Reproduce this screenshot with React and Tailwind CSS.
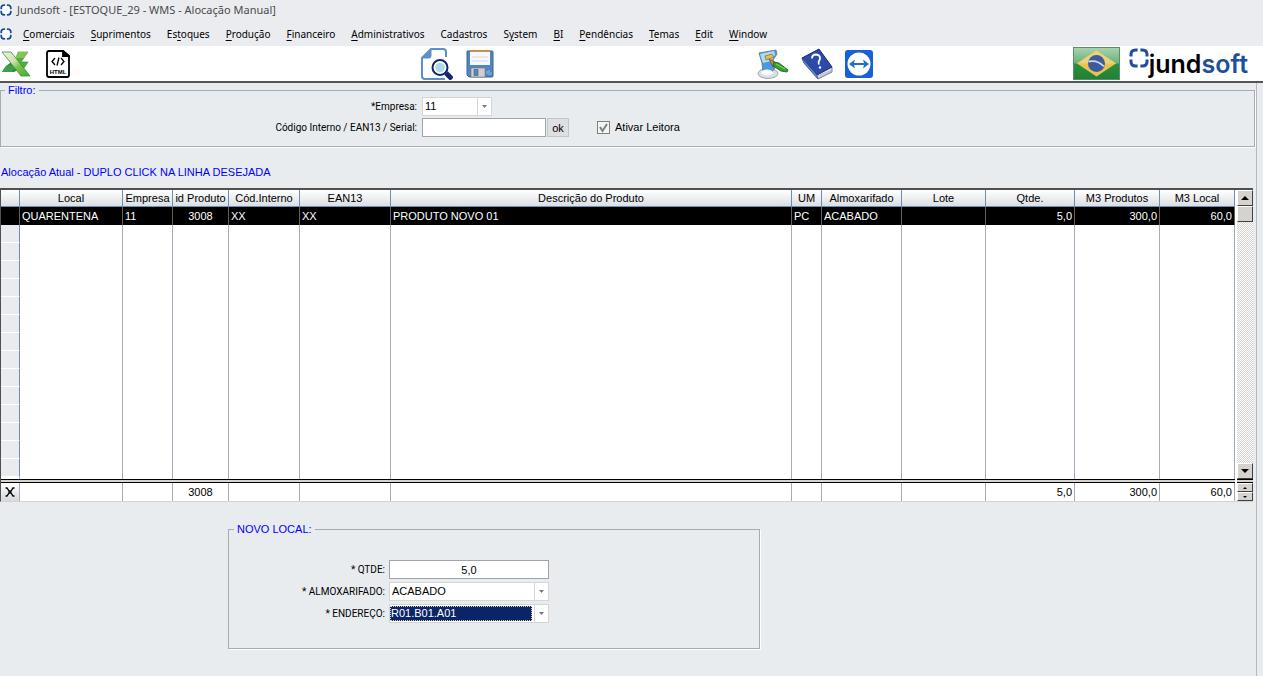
import React, { useState } from "react";

const menus = [
  ["", "C", "omerciais"],
  ["", "S", "uprimentos"],
  ["Es", "t", "oques"],
  ["", "P", "rodução"],
  ["", "F", "inanceiro"],
  ["", "A", "dministrativos"],
  ["Ca", "d", "astros"],
  ["S", "y", "stem"],
  ["", "B", "I"],
  ["", "P", "endências"],
  ["", "T", "emas"],
  ["", "E", "dit"],
  ["", "W", "indow"],
];

const columns = [
  { title: "", width: "w-[19px]" },
  { title: "Local", width: "w-[103px]", value: "QUARENTENA" },
  { title: "Empresa", width: "w-[50px]", value: "11" },
  { title: "id Produto", width: "w-[56px]", value: "3008", total: "3008", align: "text-center" },
  { title: "Cód.Interno", width: "w-[71px]", value: "XX" },
  { title: "EAN13", width: "w-[91px]", value: "XX" },
  { title: "Descrição do Produto", width: "", value: "PRODUTO NOVO 01" },
  { title: "UM", width: "w-[30px]", value: "PC" },
  { title: "Almoxarifado", width: "w-[80px]", value: "ACABADO" },
  { title: "Lote", width: "w-[84px]", value: "" },
  { title: "Qtde.", width: "w-[89px]", value: "5,0", total: "5,0", align: "text-right" },
  { title: "M3 Produtos", width: "w-[85px]", value: "300,0", total: "300,0", align: "text-right" },
  { title: "M3 Local", width: "w-[75px]", value: "60,0", total: "60,0", align: "text-right" },
];

const emptyRows = Array.from({ length: 14 }, (_, i) => i);

const LogoMark = ({ size }) => (
  <svg width={size} height={size} viewBox="0 0 20 20" fill="none" stroke="#1c4f9c" strokeWidth="3" className="bg-white">
    <path d="M8.6 2H6.5Q2 2 2 6.5V8.6M11.4 2h2.1Q18 2 18 6.5V8.6M18 11.4v2.1Q18 18 13.5 18H11.4M8.6 18H6.5Q2 18 2 13.5V11.4" />
  </svg>
);

const ExcelIcon = () => (
  <svg width="30" height="28" viewBox="0 0 30 28">
    <defs>
      <linearGradient id="band" x1="0" y1="0" x2="1" y2="1">
        <stop offset="0" stopColor="#f0f3e2" />
        <stop offset=".4" stopColor="#cfe0b0" />
        <stop offset=".6" stopColor="#7dc24b" />
        <stop offset="1" stopColor="#46a83a" />
      </linearGradient>
    </defs>
    <path d="M17 2h10l-7 10h7l-4 6h-9z" fill="#4fae3c" stroke="#2f8a36" strokeWidth=".6" />
    <path d="M17 2h10l-4 6h-9z" fill="#83c552" />
    <path d="M13 10l6 9-6 3H1l4-6z" fill="#2c8a3c" />
    <path d="M1 22l4-6 12-2-6 8z" fill="#3f9f48" />
    <path d="M1 2h9l19 24h-9z" fill="url(#band)" stroke="#39933b" strokeWidth=".8" />
  </svg>
);

const HtmlIcon = () => (
  <svg width="24" height="28" viewBox="0 0 24 28" fill="none" stroke="#000" strokeWidth="1.800">
    <path d="M3 1h14l6 5v19q0 2-2 2H3q-2 0-2-2V3q0-2 2-2z" />
    <path d="M17 1v5h6z" fill="#000" />
    <path d="M9 8l-3 3.500 3 3.500M15 8l3 3.500-3 3.500M13 7.500l-2 8" strokeWidth="1.300" />
    <text x="12" y="23.500" fontSize="6" fontWeight="700" fontFamily="Liberation Sans, sans-serif" textAnchor="middle" fill="#000" stroke="none">HTML</text>
  </svg>
);

const SearchDocIcon = () => (
  <svg width="32" height="32" viewBox="0 0 32 32" fill="none">
    <path d="M25 9V4q0-3-3-3H10L1 10v18q0 3 3 3h20" stroke="#5a91cc" strokeWidth="2" />
    <path d="M10 1v7q0 2-2 2H1z" fill="#5a91cc" stroke="#5a91cc" />
    <path d="M25 25l6 6" stroke="#14246e" strokeWidth="5" />
    <circle cx="19" cy="19.500" r="7.500" fill="#fff" stroke="#14246e" strokeWidth="2" />
    <circle cx="19" cy="19.500" r="4.800" fill="#addbe9" />
  </svg>
);

const SaveIcon = () => (
  <svg width="28" height="28" viewBox="0 0 28 28">
    <path d="M1 1h25q1 0 1 1v24q0 1-1 1H3l-2-2z" fill="#4d86c6" stroke="#3c6293" />
    <path d="M4 1h20v14H4z" fill="#f7f8fb" />
    <path d="M4 0h20v2H4z" fill="#c8924a" />
    <path d="M6 7h16M6 11h16" stroke="#d4d8e4" />
    <path d="M5 18h14v9H5z" fill="#cfd0cb" stroke="#777" strokeWidth=".6" />
    <path d="M8 19.500h4v6H8z" fill="#5b86b8" stroke="#395a86" strokeWidth=".6" />
    <path d="M21 24v-3M23 25v-5M25 25v-3" stroke="#8ebcf0" />
  </svg>
);

const ThemeIcon = () => (
  <svg width="32" height="30" viewBox="0 0 32 30">
    <ellipse cx="11" cy="24.500" rx="10" ry="5" fill="#dcdfe2" stroke="#8b9299" strokeWidth=".8" />
    <path d="M2 4l17-3 1 4-4 6 2 8-4 5-8-1-1-9z" fill="#4a9ae0" stroke="#76838f" />
    <path d="M3 5l14-3 1 4-4 6-8 2z" fill="#a9def5" />
    <ellipse cx="10" cy="23.500" rx="6" ry="3" fill="#fafafa" />
    <path d="M8 7l7-2 2 3-8 3z" fill="#e8bd4b" stroke="#8a6a2c" strokeWidth=".7" />
    <path d="M12 10l6 3-2 5z" fill="#c58a48" stroke="#6b4a24" strokeWidth=".7" />
    <path d="M17 13l5 1 9 7-1 2-6-1-8-5z" fill="#3aa02e" stroke="#1d631c" strokeWidth=".9" />
    <path d="M19 15l9 5" stroke="#8bd672" />
  </svg>
);

const HelpIcon = () => (
  <svg width="32" height="32" viewBox="0 0 32 32">
    <path d="M1 10l2 5 14 16 14-7V19z" fill="#dfe3ec" stroke="#56627f" strokeWidth=".8" />
    <path d="M17 28l14-6M17 30l14-7" stroke="#9aa3b5" strokeWidth=".6" />
    <path d="M1 10L18 1l13 18-15 8z" fill="#2c4aa8" stroke="#1b2c6e" />
    <path d="M1 10l2 5 14 16-1-4z" fill="#6384cb" stroke="#31498c" strokeWidth=".6" />
    <path d="M11 10.500q0-4 4-4 4 .5 4 3.500 0 2-1 3t0 3.500" fill="none" stroke="#fff" strokeWidth="1.800" />
    <circle cx="19" cy="19.500" r="1.200" fill="#fff" />
  </svg>
);

const RemoteIcon = () => (
  <svg width="28" height="28" viewBox="0 0 28 28">
    <rect width="28" height="28" rx="3" fill="#1561d6" />
    <circle cx="14" cy="14" r="11.500" fill="#fff" />
    <path d="M4 14l6-4.500-1 3.500h10l-1-3.500 6 4.500-6 4.500 1-3.500H9l1 3.500z" fill="#1f6fcb" />
  </svg>
);

const BrazilFlag = () => (
  <svg width="47" height="33" viewBox="0 0 47 33">
    <defs>
      <linearGradient id="green" x1="0" y1="0" x2="0" y2="1">
        <stop offset="0" stopColor="#a9d3b0" />
        <stop offset=".48" stopColor="#6db27a" />
        <stop offset=".52" stopColor="#27913c" />
        <stop offset="1" stopColor="#237f33" />
      </linearGradient>
    </defs>
    <rect x=".5" y=".5" width="46" height="32" fill="url(#green)" stroke="#568f6b" />
    <path d="M23.500 3.500L43 16.500 23.500 29.500 4 16.500z" fill="#e8c350" />
    <path d="M23.500 3.500L43 16.500H4z" fill="#edd27c" />
    <circle cx="23.500" cy="16.500" r="8.500" fill="#3d5a9d" />
    <path d="M15.500 14.500q9-2 15.500 5" fill="none" stroke="#c9d8ea" strokeWidth="1.800" />
  </svg>
);

const IconButton = ({ label, children }) => (
  <button type="button" aria-label={label} className="block">
    {children}
  </button>
);

const ComboBox = ({ id, options, width, selected }) => (
  <div className={`flex h-[19px] border border-[#d3d5d9] bg-white ${width}`}>
    <select
      id={id}
      className={
        selected
          ? "h-[15px] my-px mr-[2px] min-w-0 flex-1 appearance-none bg-[#0a246a] text-white outline-dotted outline-1 -outline-offset-1 outline-[#e8d48a] pl-px leading-none"
          : "min-w-0 flex-1 appearance-none bg-white text-black outline-none pl-[2px] leading-none"
      }
    >
      {options.map((o) => (
        <option key={o}>{o}</option>
      ))}
    </select>
    <span className="flex w-[14px] items-center justify-center border-l border-[#d3d5d9]">
      <svg width="5" height="3" viewBox="0 0 5 3">
        <path d="M0 0h5L2.500 3z" fill="#777" />
      </svg>
    </span>
  </div>
);

const arrowButton =
  "flex w-full items-center justify-center bg-[#d6d3ce] border border-t-white border-l-white border-r-[#404040] border-b-[#404040]";

const Arrow = ({ up, small }) => (
  <svg width={small ? 4 : 8} height={small ? 2 : 4} viewBox="0 0 8 4">
    <path d={up ? "M0 4h8L4 0z" : "M0 0h8L4 4z"} fill="#000" />
  </svg>
);

const ScrollColumn = () => (
  <div className="flex w-[16px] flex-col">
    <button type="button" aria-label="Subir" className={`h-[16px] ${arrowButton}`}>
      <Arrow up />
    </button>
    <div className="h-[16px] bg-[#d6d3ce] border border-t-white border-l-white border-r-[#404040] border-b-[#404040]" />
    <div className="flex-1 bg-[repeating-conic-gradient(#ffffff_0_25%,#d6d3ce_0_50%)] bg-size-[2px_2px]" />
    <button type="button" aria-label="Descer" className={`h-[16px] ${arrowButton}`}>
      <Arrow />
    </button>
    <div className="h-[4px] border-y border-black bg-[#d6d3ce]" />
    <button type="button" aria-label="Anterior" className={`h-[9px] ${arrowButton}`}>
      <Arrow up small />
    </button>
    <button type="button" aria-label="Próximo" className={`h-[9px] ${arrowButton}`}>
      <Arrow small />
    </button>
  </div>
);

const StockTable = () => (
  <div className="mr-[3px] flex border-t-2 border-b border-l border-t-[#505050] border-b-[#d6d3ce] border-l-[#505050] bg-white">
    <div className="min-w-0 flex-1 border-r-2 border-white">
      <table className="w-full table-fixed border-separate border-spacing-0 leading-[16px]">
        <colgroup>
          {columns.map((c) => (
            <col key={c.title} className={c.width} />
          ))}
        </colgroup>
        <thead>
          <tr className="h-[17px]">
            {columns.map((c) => (
              <th
                key={c.title}
                className="h-[17px] whitespace-nowrap border-r border-b border-[#6f8db0] bg-linear-to-b from-white to-[#dcdfe3] p-0 text-center font-normal"
              >
                {c.title}
              </th>
            ))}
          </tr>
        </thead>
        <tbody>
          <tr className="h-[18px] bg-black text-white">
            {columns.map((c) => (
              <td key={c.title} className={`h-[18px] whitespace-nowrap border-r border-[#6b5d52] px-[2px] py-0 ${c.align || ""}`}>
                {c.value}
              </td>
            ))}
          </tr>
          {emptyRows.map((r) => (
            <tr key={r} className="h-[18px]">
              {columns.map((c, i) => (
                <td
                  key={c.title}
                  className={
                    i === 0
                      ? "h-[18px] border-r border-b border-r-[#6f8db0] border-b-white bg-[#e9ebee] p-0"
                      : "h-[18px] border-r border-[#a3acb8] p-0"
                  }
                />
              ))}
            </tr>
          ))}
          <tr className="h-[2px]">
            {columns.map((c) => (
              <td key={c.title} className="h-[2px] border-r border-[#a3acb8] p-0" />
            ))}
          </tr>
        </tbody>
        <tfoot>
          <tr>
            <td colSpan={columns.length} className="h-[4px] border-y border-black bg-[#d6d3ce] p-0 leading-none" />
          </tr>
          <tr className="h-[18px]">
            {columns.map((c, i) => (
              <td
                key={c.title}
                className={`h-[18px] border-r border-[#a3acb8] px-[2px] py-0 ${i === 0 ? "bg-linear-to-b from-white to-[#d5d8dd]" : ""} ${c.align || ""}`}
              >
                {i === 0 ? (
                  <svg width="10" height="10" viewBox="0 0 10 10" fill="none" stroke="#000" strokeWidth="1.300" className="mx-auto">
                    <path d="M.5 1h1.500l2 3h2l2-3H9.500M.5 9h1.500l2-3h2l2 3H9.500M4 4v2M6 4v2" />
                  </svg>
                ) : (
                  c.total
                )}
              </td>
            ))}
          </tr>
        </tfoot>
      </table>
    </div>
    <ScrollColumn />
  </div>
);

const label = "text-right font-[Roboto,sans-serif] text-[10px]";

const App = () => {
  const [reader, setReader] = useState(true);
  const [code, setCode] = useState("");
  const [qty, setQty] = useState("5,0");

  return (
    <main className="flex min-h-screen flex-col bg-[#e9ecef] font-['Liberation_Sans',sans-serif] text-[11px] text-black">
      {/* Title bar */}
      <header className="font-['Noto_Sans',sans-serif] bg-[#ebecf0]">
        <div className="flex h-[20px] items-center gap-[5px] text-[#4a4a4a]">
          <LogoMark size={12} />
          <h1>Jundsoft - [ESTOQUE_29 - WMS - Alocação Manual]</h1>
        </div>

        {/* Menu */}
        <nav className="flex h-[26px] items-center gap-[11px] pt-[2px]">
          <LogoMark size={12} />
          <div className="flex gap-[16px] text-[10px]">
            {menus.map(([before, key, after]) => (
              <button type="button" key={before + key + after}>
                {before}
                <span className="underline underline-offset-2">{key}</span>
                {after}
              </button>
            ))}
          </div>
        </nav>
      </header>

      {/* Toolbar */}
      <div className="flex h-[37px] items-center justify-between border-b-2 border-[#555] bg-white pr-[15px] pl-px">
        <div className="flex w-[420px] items-center gap-[15px]">
          <IconButton label="Excel"><ExcelIcon /></IconButton>
          <IconButton label="HTML"><HtmlIcon /></IconButton>
        </div>
        <div className="flex flex-1 items-center gap-[13px]">
          <IconButton label="Pesquisar"><SearchDocIcon /></IconButton>
          <IconButton label="Salvar"><SaveIcon /></IconButton>
        </div>
        <div className="flex w-[316px] items-center gap-[12px]">
          <IconButton label="Temas"><ThemeIcon /></IconButton>
          <IconButton label="Ajuda"><HelpIcon /></IconButton>
          <IconButton label="Acesso remoto"><RemoteIcon /></IconButton>
        </div>
        <div className="flex items-center gap-[9px]">
          <BrazilFlag />
          <div className="flex font-[Inter,sans-serif] text-[25px] leading-[32px] font-semibold">
            <LogoMark size={20} />
            <span>jund</span>
            <span className="text-[#1c4f9c]">soft</span>
          </div>
        </div>
      </div>

      <div className="mr-[6px] flex-1 border-r border-[#b5b8bc] pb-[20px]">
        {/* Filtro */}
        <fieldset className="mr-px h-[64px] border border-[#a5acb5] pl-[2px] shadow-[1px_1px_0_#fff]">
          <legend className="ml-[2px] px-[3px] leading-[14px] text-[#0000ff]">Filtro:</legend>
          <div className="grid grid-cols-[414px_1fr] items-center gap-x-[5px] gap-y-[2px]">
            <label htmlFor="empresa" className={label}>*Empresa:</label>
            <ComboBox id="empresa" options={["11"]} width="w-[70px]" />
            <label htmlFor="codigo" className={label}>Código Interno / EAN13 / Serial:</label>
            <div className="flex items-center">
              <input
                id="codigo"
                type="text"
                value={code}
                onChange={(e) => setCode(e.target.value)}
                className="h-[19px] w-[124px] border border-[#9fa4aa] bg-white px-[2px] outline-none"
              />
              <button type="button" className="ml-px h-[19px] w-[22px] border border-[#c2c5c9] bg-[#dddfe2] leading-[16px]">
                ok
              </button>
              <label className="ml-[28px] flex items-center gap-[5px]">
                <span className="relative size-[13px]">
                  <input
                    type="checkbox"
                    checked={reader}
                    onChange={(e) => setReader(e.target.checked)}
                    className="peer block size-[13px] appearance-none border border-[#7c827e] bg-[#f4f4f2]"
                  />
                  <svg viewBox="0 0 13 13" className="pointer-events-none absolute inset-0 hidden peer-checked:block" fill="none" stroke="#7c827e" strokeWidth="2">
                    <path d="M3 6l2.500 4L10 3" />
                  </svg>
                </span>
                Ativar Leitora
              </label>
            </div>
          </div>
        </fieldset>

        {/* Alocação atual */}
        <h2 className="mt-[17px] mb-[8px] pl-px leading-[16px] text-[#0000ff]">
          Alocação Atual - DUPLO CLICK NA LINHA DESEJADA
        </h2>
        <StockTable />

        {/* Novo local */}
        <fieldset className="mt-[20px] ml-[228px] h-[127px] w-[532px] border border-[#a5acb0] shadow-[1px_1px_0_#fff]">
          <legend className="ml-[5px] px-[3px] leading-[14px] text-[#0000ff]">NOVO LOCAL:</legend>
          <div className="mt-[24px] grid grid-cols-[156px_160px] items-center gap-x-[4px] gap-y-[3px]">
            <label htmlFor="qtde" className={label}>* QTDE:</label>
            <input
              id="qtde"
              type="text"
              value={qty}
              onChange={(e) => setQty(e.target.value)}
              className="h-[19px] border border-[#9fa4aa] bg-white text-center outline-none"
            />
            <label htmlFor="almoxarifado" className={label}>* ALMOXARIFADO:</label>
            <ComboBox id="almoxarifado" options={["ACABADO"]} width="w-full" />
            <label htmlFor="endereco" className={label}>* ENDEREÇO:</label>
            <ComboBox id="endereco" options={["R01.B01.A01"]} width="w-full" selected />
          </div>
        </fieldset>
      </div>
    </main>
  );
};

export default App;
